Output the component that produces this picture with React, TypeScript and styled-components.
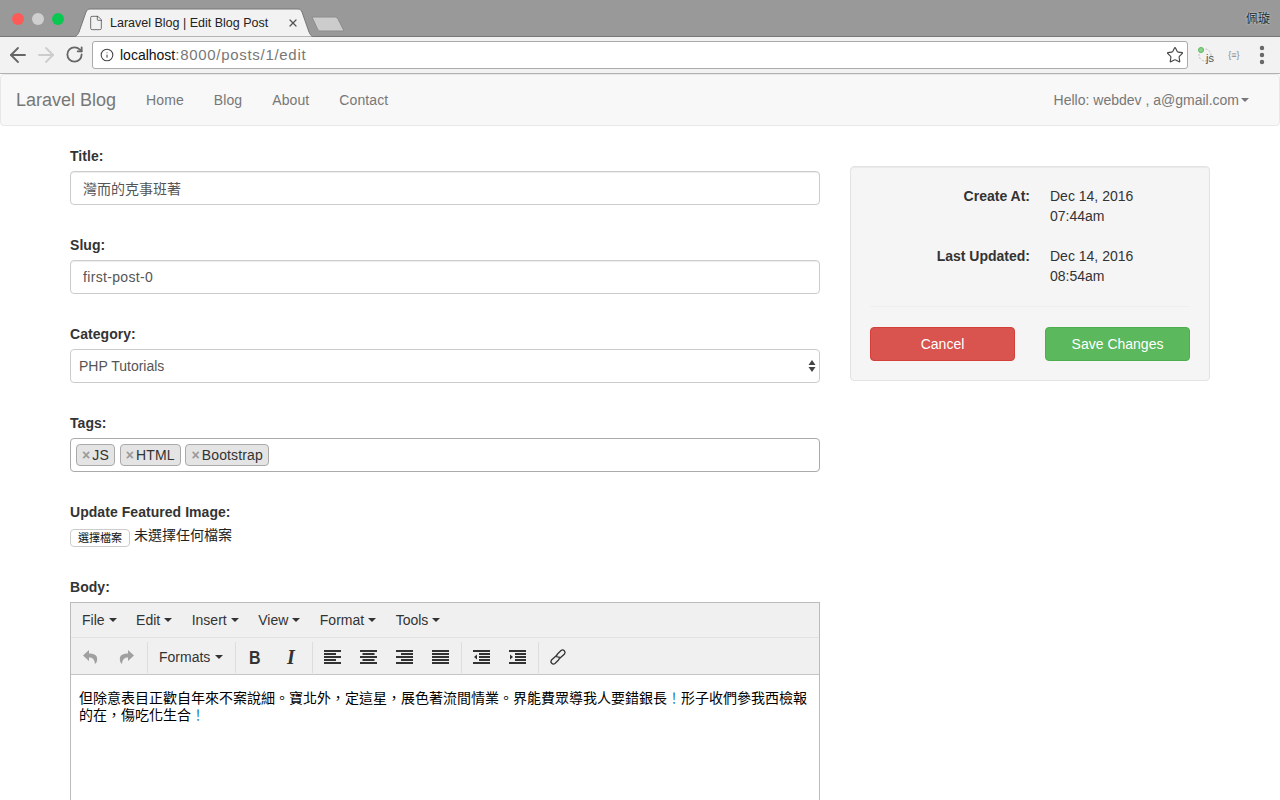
import { createGlobalStyle, styled } from "styled-components";
import { ArrowLeft, ArrowRight, EllipsisVertical, File as FileIcon, Info, RotateCw, Star, X } from "lucide-react";

const SANS = `"Liberation Sans", "Noto Sans CJK TC", sans-serif`;

const GlobalStyle = createGlobalStyle`
  html, body { margin: 0; height: 800px; overflow: hidden; background: #fff; }
  body { font: 14px/20px ${SANS}; color: #333; }
  * { box-sizing: border-box; }
`;

/* browser chrome */
const TabStrip = styled.div`
  display: flex;
  align-items: flex-end;
  height: 37px;
  padding-left: 72px;
  background: #999;
  border-bottom: 1px solid #777;
`;
const Lights = styled.div`
  position: absolute;
  top: 13px;
  left: 12px;
  display: flex;
  gap: 8px;
`;
const Light = styled.span<{ $color: string }>`
  width: 12px;
  height: 12px;
  border-radius: 50%;
  background: ${(p) => p.$color};
`;
const Tab = styled.div`
  position: relative;
  display: flex;
  align-items: center;
  width: 243px;
  height: 29px;
  margin-bottom: -1px;
  padding: 0 16px 0 16px;
  font-size: 12.5px;
  color: #222;
`;
const TabShape = styled.svg`
  position: absolute;
  inset: 0;
`;
const TabLabel = styled.span`
  position: relative;
  flex: 1;
  margin-left: 6px;
`;
const NewTab = styled.svg`
  margin: 0 0 4px -4px;
`;
const Profile = styled.span`
  margin: 0 10px 7px auto;
  font-size: 12px;
  color: #222;
  text-shadow: 0 0 2px #dff;
`;
const Toolbar = styled.div`
  display: flex;
  align-items: center;
  height: 37px;
  padding: 0 4px 1px 4px;
  background: #f2f2f2;
  border-bottom: 1px solid #b2b2b2;
  color: #666;
`;
const NavIcon = styled.span<{ $faded?: boolean }>`
  display: flex;
  justify-content: center;
  width: 28px;
  color: ${(p) => (p.$faded ? "#ccc" : "#666")};
`;
const Omnibox = styled.div`
  display: flex;
  align-items: center;
  flex: 1;
  height: 28px;
  margin: 0 4px;
  padding: 0 3px 0 7px;
  background: #fff;
  border: 1px solid #aaa;
  border-radius: 3px;
  font-size: 14px;
  color: #777;
`;
const Url = styled.span`
  flex: 1;
  margin-left: 6px;
`;
const Host = styled.span`
  color: #111;
`;
const UrlPath = styled.span`
  font-size: 15px;
  letter-spacing: 0.7px;
`;
const ExtSlot = styled.span`
  display: flex;
  align-items: center;
  justify-content: center;
  width: 28px;
  font-size: 9px;
  color: #888;
`;

/* site navbar */
const Navbar = styled.nav`
  display: flex;
  align-items: center;
  height: 52px;
  padding: 0 30px 0 15px;
  background: #f8f8f8;
  border: 1px solid #e7e7e7;
  border-radius: 4px;
  color: #777;
`;
const Brand = styled.a`
  margin-right: 15px;
  font-size: 18px;
`;
const NavLink = styled.a`
  padding: 0 15px;
  letter-spacing: 0.1px;
`;
const UserMenu = styled.a`
  display: flex;
  align-items: center;
  margin-left: auto;
`;
const Caret = styled.i<{ $gap?: number }>`
  display: inline-block;
  width: 0;
  height: 0;
  margin-left: ${(p) => p.$gap ?? 2}px;
  border-top: 4px solid currentColor;
  border-left: 4px solid transparent;
  border-right: 4px solid transparent;
`;

/* page layout */
const Container = styled.main`
  display: grid;
  grid-template-columns: 750px 360px;
  column-gap: 30px;
  align-items: start;
  padding: 20px 70px 0;
`;
const Group = styled.div`
  margin-bottom: 30px;
`;
const Label = styled.label`
  display: block;
  margin-bottom: 5px;
  font-weight: 700;
  letter-spacing: 0.05px;
`;
const TextInput = styled.input<{ $tracking?: number }>`
  display: block;
  width: 100%;
  height: 34px;
  padding: 6px 12px;
  font: 14px/20px ${SANS};
  letter-spacing: ${(p) => p.$tracking ?? 0}px;
  color: #555;
  background: #fff;
  border: 1px solid #ccc;
  border-radius: 4px;
  box-shadow: inset 0 1px 1px rgba(0, 0, 0, 0.075);
  outline: none;
`;
const SelectWrap = styled.div`
  position: relative;
`;
const Select = styled.select`
  display: block;
  width: 100%;
  height: 34px;
  padding: 6px 8px;
  font: 14px/20px ${SANS};
  color: #555;
  background: #fff;
  border: 1px solid #ccc;
  border-radius: 4px;
  appearance: none;
  outline: none;
`;
const SelectArrows = styled.svg`
  position: absolute;
  top: 10px;
  right: 3px;
`;
const TagBox = styled.div`
  display: flex;
  gap: 4.7px;
  height: 34px;
  padding: 5px;
  border: 1px solid #aaa;
  border-radius: 4px;
`;
const Tag = styled.span`
  display: flex;
  align-items: center;
  height: 22px;
  padding: 0 5px;
  letter-spacing: 0.15px;
  background: #e4e4e4;
  border: 1px solid #aaa;
  border-radius: 4px;
`;
const TagRemove = styled.b`
  margin-right: 2px;
  color: #999;
`;
const FileRow = styled.div`
  display: flex;
  align-items: flex-start;
  gap: 4px;
  height: 20px;
  line-height: 16px;
  color: #222;
`;
const FileButton = styled.button`
  width: 60px;
  height: 18px;
  margin-top: 2px;
  padding: 0;
  font: 11px/16px ${SANS};
  color: #111;
  background: #fff;
  border: 1px solid #ccc;
  border-radius: 4px;
`;

/* tinymce */
const Editor = styled.div`
  height: 240px;
  border: 1px solid #bbb;
`;
const MenuBar = styled.div`
  display: flex;
  gap: 19.5px;
  align-items: center;
  height: 35px;
  padding-left: 11px;
  background: #f0f0f0;
  border-bottom: 1px solid #e2e2e2;
  color: #333;
`;
const MenuItem = styled.span`
  display: flex;
  align-items: center;
`;
const ToolBar = styled.div`
  display: flex;
  align-items: center;
  height: 37px;
  padding-top: 2px;
  background: #f0f0f0;
  border-bottom: 1px solid #c5c5c5;
`;
const ToolGroup = styled.div<{ $last?: boolean }>`
  display: flex;
  align-items: center;
  height: 31px;
  margin-right: 1px;
  padding-right: 3px;
  border-right: ${(p) => (p.$last ? "none" : "1px solid #ddd")};
  &:first-child {
    margin-left: 1px;
  }
`;
const ToolButton = styled.span<{ $faded?: boolean }>`
  display: flex;
  align-items: center;
  justify-content: center;
  width: 36px;
  height: 31px;
  color: ${(p) => (p.$faded ? "#a0a0a0" : "#333")};
`;
const FormatsButton = styled.span`
  display: flex;
  align-items: center;
  width: 83px;
  padding-left: 10px;
  color: #333;
`;
const BoldGlyph = styled.b`
  display: inline-block;
  font: 700 19px/1 ${SANS};
  transform: scaleX(0.84);
`;
const ItalicGlyph = styled.i`
  font: italic 700 20px/1 "Liberation Serif", serif;
`;
const EditorBody = styled.div`
  padding: 15px 8px;
  font-size: 14px;
  line-height: 17px;
  color: #000;
`;
const Bang = styled.span`
  color: #2a7fb8;
`;

/* sidebar */
const Well = styled.aside`
  margin-top: 20px;
  padding: 19px;
  background: #f5f5f5;
  border: 1px solid #e3e3e3;
  border-radius: 4px;
  box-shadow: inset 0 1px 1px rgba(0, 0, 0, 0.05);
`;
const MetaList = styled.dl`
  display: grid;
  grid-template-columns: 160px 1fr;
  column-gap: 20px;
  row-gap: 20px;
  margin: 0;
`;
const MetaTerm = styled.dt`
  font-weight: 700;
  text-align: right;
`;
const MetaValue = styled.dd`
  margin: 0;
`;
const Divider = styled.hr`
  margin: 20px 0;
  border: 0;
  border-top: 1px solid #eee;
`;
const Actions = styled.div`
  display: grid;
  grid-template-columns: 1fr 1fr;
  column-gap: 30px;
`;
const ActionButton = styled.button<{ $bg: string; $edge: string }>`
  height: 34px;
  font: 14px/20px ${SANS};
  color: #fff;
  background: ${(p) => p.$bg};
  border: 1px solid ${(p) => p.$edge};
  border-radius: 4px;
`;

type AlignKind = "left" | "center" | "right" | "justify";

function AlignIcon({ kind }: { kind: AlignKind }) {
  return (
    <svg width="17" height="14" viewBox="0 0 17 14" fill="currentColor">
      {[0, 1, 2, 3, 4].map((i) => {
        const w = kind === "justify" || i % 2 === 0 ? 17 : 12;
        const x = kind === "left" || kind === "justify" ? 0 : kind === "right" ? 17 - w : (17 - w) / 2;
        return <rect key={i} x={x} y={i * 3} width={w} height="2" />;
      })}
    </svg>
  );
}

function IndentIcon({ flip }: { flip?: boolean }) {
  return (
    <svg width="17" height="14" viewBox="0 0 17 14" fill="currentColor">
      <rect x="0" y="0" width="17" height="2" />
      <rect x="6" y="3" width="11" height="2" />
      <rect x="6" y="6" width="11" height="2" />
      <rect x="6" y="9" width="11" height="2" />
      <rect x="0" y="12" width="17" height="2" />
      <path d={flip ? "M1 4.5 4 7 1 9.5Z" : "M4 4.5 1 7 4 9.5Z"} />
    </svg>
  );
}

function UndoIcon({ flip }: { flip?: boolean }) {
  return (
    <svg width="15" height="15" viewBox="0 0 15 15" fill="currentColor" style={flip ? { transform: "scaleX(-1)" } : undefined}>
      <path d="M6 0 0 5.500 6 11V7.500c3.500 0 5.500 1.500 6 6.500 2-1.500 2.500-4 2-6.500C13.300 4.500 10 3.500 6 3.500Z" />
    </svg>
  );
}

function LinkIcon() {
  return (
    <svg width="18" height="18" viewBox="0 0 18 18" fill="none" stroke="currentColor" strokeWidth="1.3">
      <path d="M7.500 7.500 2.500 12a2.500 2.500 0 0 0 3.500 3.500l3.500-3.500a2.500 2.500 0 0 0 0-3.500" />
      <path d="M10.500 10.500 15.500 6a2.500 2.500 0 0 0-3.500-3.500L8.500 6a2.500 2.500 0 0 0 0 3.500" />
    </svg>
  );
}

export default function App() {
  return (
    <>
      <GlobalStyle />
      <TabStrip>
        <Lights>
          <Light $color="#fc5b57" />
          <Light $color="#cfcfcf" />
          <Light $color="#0ac84f" />
        </Lights>
        <Tab>
          <TabShape width="243" height="29" viewBox="0 0 243 29">
            <path d="M0 29C5 29 6 26 7 24L14 4C15 2 16 1 18 1H226C228 1 229 2 230 4L237 24C238 26 239 29 243 29Z" fill="#f2f2f2" stroke="#777" />
          </TabShape>
          <FileIcon size={16} strokeWidth={1} color="#333" style={{ position: "relative" }} />
          <TabLabel>Laravel Blog | Edit Blog Post</TabLabel>
          <X size={12} strokeWidth={2.500} color="#555" style={{ position: "relative" }} />
        </Tab>
        <NewTab width="34" height="16" viewBox="0 0 34 16">
          <path d="M1 1H24C25 1 26 2 27 3L33 15H9C8 15 7 14 6.500 13Z" fill="#ccc" stroke="#8c8c8c" />
        </NewTab>
        <Profile>佩璇</Profile>
      </TabStrip>
      <Toolbar>
        <NavIcon><ArrowLeft size={24} strokeWidth={1.800} /></NavIcon>
        <NavIcon $faded><ArrowRight size={24} strokeWidth={1.800} /></NavIcon>
        <NavIcon><RotateCw size={19} strokeWidth={2.300} /></NavIcon>
        <Omnibox>
          <Info size={14} strokeWidth={1.800} color="#444" />
          <Url><Host>localhost</Host><UrlPath>:8000/posts/1/edit</UrlPath></Url>
          <Star size={18} strokeWidth={1.500} color="#444" />
        </Omnibox>
        <ExtSlot>
          <svg width="22" height="20" viewBox="0 0 22 20">
            <circle cx="10" cy="10" r="6" fill="none" stroke="#bbb" strokeDasharray="2 1.500" />
            <circle cx="6" cy="5" r="2.500" fill="#8ad38a" stroke="#5cb85c" />
            <text x="11" y="17" fontSize="11" fontFamily="Liberation Sans" fill="#555">js</text>
          </svg>
        </ExtSlot>
        <ExtSlot>{"{≡}"}</ExtSlot>
        <ExtSlot><EllipsisVertical size={24} strokeWidth={2.400} color="#666" /></ExtSlot>
      </Toolbar>
      <Navbar>
        <Brand>Laravel Blog</Brand>
        <NavLink>Home</NavLink>
        <NavLink>Blog</NavLink>
        <NavLink>About</NavLink>
        <NavLink>Contact</NavLink>
        <UserMenu>Hello: webdev , a@gmail.com<Caret /></UserMenu>
      </Navbar>
      <Container>
        <section>
          <Group>
            <Label>Title:</Label>
            <TextInput readOnly value="灣而的克事班著" />
          </Group>
          <Group>
            <Label>Slug:</Label>
            <TextInput readOnly value="first-post-0" $tracking={0.33} />
          </Group>
          <Group>
            <Label>Category:</Label>
            <SelectWrap>
              <Select defaultValue="php">
                <option value="php">PHP Tutorials</option>
              </Select>
              <SelectArrows width="10" height="14" viewBox="0 0 10 14" fill="#444">
                <path d="M5 1 8.500 6H1.500ZM5 13 1.500 8H8.500Z" />
              </SelectArrows>
            </SelectWrap>
          </Group>
          <Group>
            <Label>Tags:</Label>
            <TagBox>
              {["JS", "HTML", "Bootstrap"].map((tag) => (
                <Tag key={tag}><TagRemove>×</TagRemove>{tag}</Tag>
              ))}
            </TagBox>
          </Group>
          <Group>
            <Label>Update Featured Image:</Label>
            <FileRow>
              <FileButton>選擇檔案</FileButton>
              未選擇任何檔案
            </FileRow>
          </Group>
          <Label>Body:</Label>
          <Editor>
            <MenuBar>
              {["File", "Edit", "Insert", "View", "Format", "Tools"].map((item) => (
                <MenuItem key={item}>{item}<Caret $gap={4} /></MenuItem>
              ))}
            </MenuBar>
            <ToolBar>
              <ToolGroup>
                <ToolButton $faded><UndoIcon /></ToolButton>
                <ToolButton $faded><UndoIcon flip /></ToolButton>
              </ToolGroup>
              <ToolGroup>
                <FormatsButton>Formats<Caret $gap={5} /></FormatsButton>
              </ToolGroup>
              <ToolGroup>
                <ToolButton><BoldGlyph>B</BoldGlyph></ToolButton>
                <ToolButton><ItalicGlyph>I</ItalicGlyph></ToolButton>
              </ToolGroup>
              <ToolGroup>
                <ToolButton><AlignIcon kind="left" /></ToolButton>
                <ToolButton><AlignIcon kind="center" /></ToolButton>
                <ToolButton><AlignIcon kind="right" /></ToolButton>
                <ToolButton><AlignIcon kind="justify" /></ToolButton>
              </ToolGroup>
              <ToolGroup>
                <ToolButton><IndentIcon /></ToolButton>
                <ToolButton><IndentIcon flip /></ToolButton>
              </ToolGroup>
              <ToolGroup $last>
                <ToolButton><LinkIcon /></ToolButton>
              </ToolGroup>
            </ToolBar>
            <EditorBody>
              但除意表目正歡自年來不案說細。寶北外，定這星，展色著流間情業。界能費眾導我人要錯銀長<Bang>！</Bang>形子收們參我西檢報的在，傷吃化生合<Bang>！</Bang>
            </EditorBody>
          </Editor>
        </section>
        <Well>
          <MetaList>
            <MetaTerm>Create At:</MetaTerm>
            <MetaValue>Dec 14, 2016<br />07:44am</MetaValue>
            <MetaTerm>Last Updated:</MetaTerm>
            <MetaValue>Dec 14, 2016<br />08:54am</MetaValue>
          </MetaList>
          <Divider />
          <Actions>
            <ActionButton $bg="#d9534f" $edge="#d43f3a">Cancel</ActionButton>
            <ActionButton $bg="#5cb85c" $edge="#4cae4c">Save Changes</ActionButton>
          </Actions>
        </Well>
      </Container>
    </>
  );
}
